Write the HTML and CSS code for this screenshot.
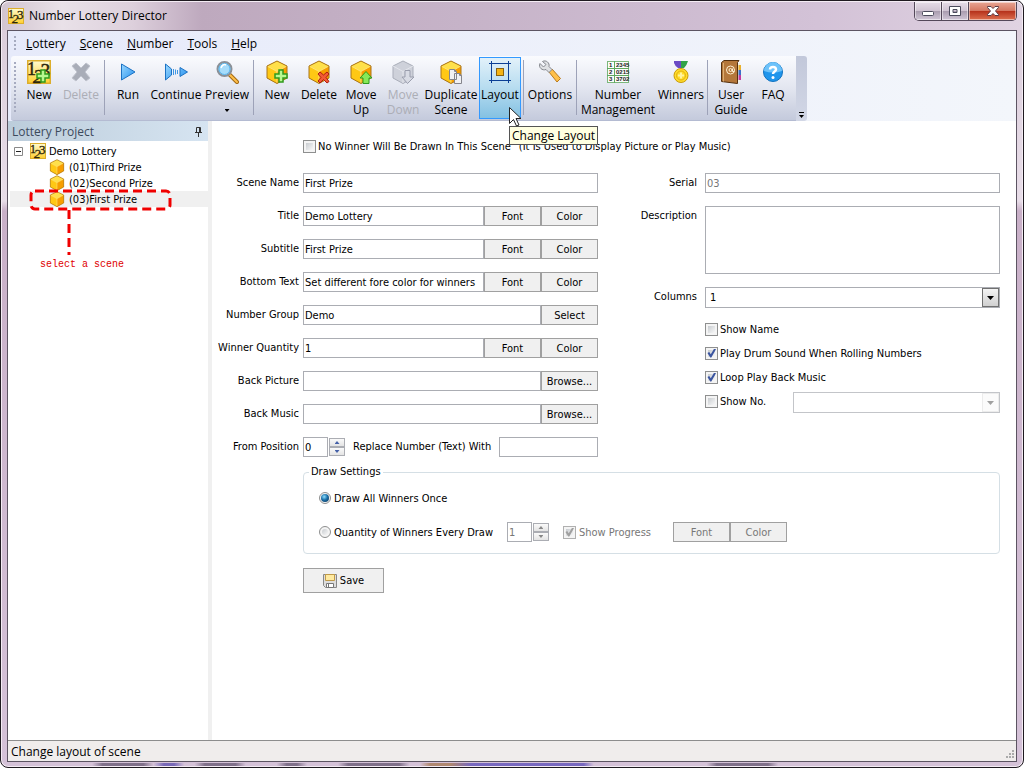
FILE: index.html
```html
<!DOCTYPE html>
<html lang="en">
<head>
    <meta charset="UTF-8">
    <meta name="viewport" content="width=device-width, initial-scale=1.0">
    <title>Number Lottery Director</title>
    <link rel="stylesheet" href="styles.css">
</head>
<body>
    <!-- shared icon parts -->
    <svg class="defs" width="0" height="0" aria-hidden="true">
        <defs>
            <linearGradient id="gold" x1="0" y1="0" x2="0" y2="1">
                <stop offset="0" stop-color="#fffbd0"/>
                <stop offset="1" stop-color="#ffcf2e"/>
            </linearGradient>
            <linearGradient id="blue" x1="0" y1="0" x2="1" y2="1">
                <stop offset="0" stop-color="#9ad8ff"/>
                <stop offset="1" stop-color="#2590ee"/>
            </linearGradient>
            <symbol id="cube" viewBox="0 0 24 24">
                <path d="M12 1 22 6 22 18 12 23.500 2 18 2 6Z" fill="#ffb400"/>
                <path d="M12 1 22 6 12 11.500 2 6Z" fill="#ffe04a"/>
                <path d="M2 6 12 11.500 12 23.500 2 18Z" fill="#ffc814"/>
                <path d="M22 6 12 11.500 12 23.500 22 18Z" fill="#f79e00"/>
                <path d="M2 6 12 11.500 22 6M12 11.500V23" fill="none" stroke="#ffe98a" stroke-width=".8"/>
                <path d="M12 1 22 6 22 18 12 23.500 2 18 2 6Z" fill="none" stroke="#a9741a"/>
            </symbol>
            <symbol id="logo" viewBox="0 0 16 16">
                <rect x=".5" y=".5" width="15" height="15" fill="url(#gold)" stroke="#dcae2c"/>
                <g font-family="Liberation Serif, serif" fill="#2c260c" stroke="#2c260c" stroke-width=".3">
                    <text x="0" y="10" font-size="12">1</text>
                    <text x="4" y="15" font-size="13" font-style="italic">2</text>
                    <text x="9" y="11" font-size="13">3</text>
                </g>
            </symbol>
            <symbol id="plus" viewBox="0 0 14 14">
                <path d="M5 1h4v4h4v4H9v4H5V9H1V5h4Z" fill="#b8f890" stroke="#2f9a1d" stroke-width="1.500"/>
            </symbol>
        </defs>
    </svg>

    <div class="window">
        <header class="titlebar">
            <svg class="icon-16"><use href="#logo"/></svg>
            <h1>Number Lottery Director</h1>
            <div class="caption">
                <button type="button" aria-label="Minimize"><svg width="14" height="14" viewBox="0 0 14 14"><rect x="1.500" y="7.500" width="11" height="4" rx="1" fill="#fff" stroke="#4b4b5c"/></svg></button>
                <button type="button" aria-label="Maximize"><svg width="14" height="14" viewBox="0 0 14 14"><path d="M1.500 2.500h11v9h-11Z M5 5.500h4v3H5Z" fill="#fff" fill-rule="evenodd" stroke="#4b4b5c"/></svg></button>
                <button type="button" class="close" aria-label="Close"><svg width="14" height="14" viewBox="0 0 14 14"><path d="M1.500 2.500h3.500l2 2 2-2h3.500v1L9.500 7l3 3.500v1H9l-2-2-2 2H1.500v-1l3-3.500-3-3.500Z" fill="#fff" stroke="#5a3a44"/></svg></button>
            </div>
        </header>

        <div class="client">
            <div class="bars">
                <nav class="menubar">
                    <a href="#"><u>L</u>ottery</a>
                    <a href="#"><u>S</u>cene</a>
                    <a href="#"><u>N</u>umber</a>
                    <a href="#"><u>T</u>ools</a>
                    <a href="#"><u>H</u>elp</a>
                </nav>

                <div class="toolbar">
                    <div class="tools">
                        <button type="button" class="tool">
                            <svg class="icon-24" viewBox="0 0 24 24"><use href="#logo" width="24" height="24"/><use href="#plus" x="9" y="9" width="14" height="14"/></svg>
                            <span>New</span>
                        </button>
                        <button type="button" class="tool" disabled>
                            <svg class="icon-24" viewBox="0 0 24 24"><path d="M3 6 7 3 12 8 17 3 21 6 16 12 21 18 17 21 12 16 7 21 3 18 8 12Z" fill="#a9adb8" stroke="#c0c3cd"/></svg>
                            <span>Delete</span>
                        </button>
                        <i class="sep"></i>
                        <button type="button" class="tool">
                            <svg class="icon-24" viewBox="0 0 24 24"><path d="M5.500 4v16L19 12Z" fill="url(#blue)" stroke="#1c72c4"/></svg>
                            <span>Run</span>
                        </button>
                        <button type="button" class="tool wide">
                            <svg class="icon-24" viewBox="0 0 24 24"><path d="M1.500 4v16l6-5V9Z M16 7.500v9l7.500-4.500Z" fill="url(#blue)" stroke="#1c72c4"/><path d="M9.500 9v6M11.500 9.500v5M13.500 10v4" stroke="#3c96e4"/></svg>
                            <span>Continue</span>
                        </button>
                        <button type="button" class="tool medium">
                            <svg class="icon-24" viewBox="0 0 24 24"><path d="M14 14 22 22" stroke="#a36a14" stroke-width="4" stroke-linecap="round"/><path d="M15 15 22 22" stroke="#ffc04a" stroke-width="2" stroke-linecap="round"/><circle cx="9.500" cy="9" r="7" fill="#a6dcfa" stroke="#8a9098" stroke-width="2"/><circle cx="9.500" cy="9" r="5.500" fill="none" stroke="#58b4ec"/><path d="M6 8c1-3 3-4 5-3" stroke="#fff" stroke-width="1.500" fill="none"/></svg>
                            <span>Preview</span>
                            <b class="drop"></b>
                        </button>
                        <i class="sep"></i>
                        <button type="button" class="tool">
                            <svg class="icon-24" viewBox="0 0 24 24"><use href="#cube" width="24" height="24"/><use href="#plus" x="9" y="9" width="14" height="14"/></svg>
                            <span>New</span>
                        </button>
                        <button type="button" class="tool">
                            <svg class="icon-24" viewBox="0 0 24 24"><use href="#cube" width="24" height="24"/><path d="M11 14l2-2 3.500 3L20 12l2 2-3 3.500 3 4-2 1.500-3.500-3.500L13 23l-2-2 3-3.500Z" fill="#f25a35" stroke="#b01c10"/></svg>
                            <span>Delete</span>
                        </button>
                        <button type="button" class="tool">
                            <svg class="icon-24" viewBox="0 0 24 24"><use href="#cube" width="24" height="24"/><path d="M17 11.500 23 18h-3v5.500h-6V18h-3Z" fill="#86e858" stroke="#2f9a1d"/></svg>
                            <span>Move Up</span>
                        </button>
                        <button type="button" class="tool" disabled>
                            <svg class="icon-24" viewBox="0 0 24 24"><path d="M12 1 22 6 22 18 12 23.500 2 18 2 6Z" fill="#ced1da" stroke="#a9adb9"/><path d="M2 6 12 11.500 22 6M12 11.500V23" fill="none" stroke="#e4e6ec"/><path d="M14 10.500h5V17h4l-6.500 6.500L11 17h3Z" fill="#d8dbe4" stroke="#9a9ead"/></svg>
                            <span>Move Down</span>
                        </button>
                        <button type="button" class="tool wide">
                            <svg class="icon-24" viewBox="0 0 24 24"><use href="#cube" width="24" height="24"/><path d="M10.500 9.500h5l2 2v8h-7Z M15.500 13.500h5l2 2v8h-7Z" fill="#f1f1f4" stroke="#85858c"/><path d="M15.500 9.500v2h2M20.500 13.500v2h2" fill="none" stroke="#85858c"/></svg>
                            <span>Duplicate Scene</span>
                        </button>
                        <div class="hot">
                            <button type="button" class="tool active">
                                <svg class="icon-24" viewBox="0 0 24 24"><path d="M1 3.500h22M1 20.500h22M3.500 1v22M20.500 1v22" stroke="#0b3f96"/><rect x="8.500" y="8.500" width="7" height="7" fill="#f5b415" stroke="#8a6310"/></svg>
                                <span>Layout</span>
                            </button>
                            <svg class="pointer" width="12" height="20" viewBox="0 0 12 20"><path d="M.5.5v16l4-4 3 6.500 2.500-1-3-6.500h5Z" fill="#fff" stroke="#222"/></svg>
                            <div class="tooltip" role="tooltip">Change Layout</div>
                        </div>
                        <i class="sep"></i>
                        <button type="button" class="tool medium">
                            <svg class="icon-24" viewBox="0 0 24 24"><path d="M11 12 14 9 22.500 18.500 19 22Z" fill="#ffc04a" stroke="#b97a1c"/><path d="M2 3.500 5.500 7 8 4.500 4.500 1.500C8-.5 12 3 11 6.500L14 9.500 11 12.500 8 9.500C4.500 11 0 7.500 2 3.500Z" fill="#dfe1e4" stroke="#85888e"/></svg>
                            <span>Options</span>
                        </button>
                        <i class="sep"></i>
                        <button type="button" class="tool extra">
                            <svg class="icon-24" viewBox="0 0 24 24">
                                <rect x="1.500" y="1.500" width="21" height="21" fill="#fafdfa" stroke="#7cb77c"/>
                                <path d="M8.500 1v22M1 8.500h22M1 15.500h22" stroke="#5fa85f"/>
                                <g font-family="Liberation Sans, sans-serif" font-size="6" font-weight="bold" fill="#222">
                                    <text x="3" y="7">1</text><text x="10" y="7">2345</text>
                                    <text x="3" y="14">2</text><text x="10" y="14">0215</text>
                                    <text x="3" y="21">3</text><text x="10" y="21">3702</text>
                                </g>
                            </svg>
                            <span>Number Management</span>
                        </button>
                        <button type="button" class="tool medium">
                            <svg class="icon-24" viewBox="0 0 24 24"><path d="M5 1h7v7H9Q6 6 5 3Z" fill="#6b4bc4"/><path d="M12 1h7Q18 5 15 8h-3Z" fill="#31a348"/><circle cx="12" cy="15.500" r="7" fill="#ffdc2b" stroke="#c99a08"/><circle cx="12" cy="15.500" r="4.500" fill="none" stroke="#e2b010"/><path d="M12 12.500v6M9 15.500h6" stroke="#fff3a0" stroke-width="2"/></svg>
                            <span>Winners</span>
                        </button>
                        <i class="sep"></i>
                        <button type="button" class="tool">
                            <svg class="icon-24" viewBox="0 0 24 24"><path d="M19 3h2v19h-2Z" fill="#f4f0e2"/><path d="M19.500 5h2.500v5h-2.500Z" fill="#e9b02e"/><path d="M19.500 10h2.500v5h-2.500Z" fill="#3c70c8"/><path d="M19.500 15h2.500v5h-2.500Z" fill="#c13aa0"/><path d="M2.500 2.500 5 .5H20L18.500 2.500V23.500L2.500 21.500Z" fill="#b4773a" stroke="#54300e"/><path d="M4.500 3v18.500" stroke="#dcae70"/><circle cx="11.500" cy="10" r="4" fill="none" stroke="#fff0d2"/><circle cx="11.500" cy="10" r="1.500" fill="none" stroke="#fff0d2"/><path d="M13.500 8.500v3h2" fill="none" stroke="#fff0d2"/></svg>
                            <span>User Guide</span>
                        </button>
                        <button type="button" class="tool">
                            <svg class="icon-24" viewBox="0 0 24 24"><circle cx="12" cy="12" r="9.500" fill="#1f95ec" stroke="#1272bf"/><path d="M3 11a9 9 0 0 1 18 0Q12 14 3 11Z" fill="#6cc2fa"/><path d="M9 9.500C9 6 15 6 15 9.500 15 11.500 12 11.500 12 14" fill="none" stroke="#fff" stroke-width="2.500"/><circle cx="12" cy="17.500" r="1.500" fill="#fff"/></svg>
                            <span>FAQ</span>
                        </button>
                    </div>
                    <button type="button" class="overflow" aria-label="More buttons"><b class="drop"></b></button>
                </div>
            </div>

            <div class="work">
                <aside class="project">
                    <h2>Lottery Project
                        <svg width="9" height="11" viewBox="0 0 9 11"><path d="M2.500 6V1.500h4V6M5.500 1v5M1 6.500h7M4.500 7v4" fill="none" stroke="#333"/></svg>
                    </h2>
                    <ul class="tree">
                        <li class="root"><svg class="expander" width="9" height="9" viewBox="0 0 9 9"><path d="M.5.5h8v8h-8Z" fill="#fff" stroke="#888"/><path d="M2 4.500h5" stroke="#222"/></svg><svg class="icon-16"><use href="#logo"/></svg>Demo Lottery</li>
                        <li><svg class="icon-16"><use href="#cube"/></svg>(01)Third Prize</li>
                        <li><svg class="icon-16"><use href="#cube"/></svg>(02)Second Prize</li>
                        <li class="selected"><svg class="icon-16"><use href="#cube"/></svg>(03)First Prize</li>
                    </ul>
                    <div class="callout">
                        <svg width="144" height="66" viewBox="0 0 144 66"><g fill="none" stroke="#f00000" stroke-width="3" stroke-dasharray="9 5"><rect x="2" y="2" width="139" height="18" rx="4"/><path d="M40 21V66"/></g></svg>
                        <p>select a scene</p>
                    </div>
                </aside>

                <main class="editor">
                    <div class="no-winner">
                        <label class="check"><input type="checkbox">No Winner Will Be Drawn In This Scene</label>
                        <span>(It Is Used to Display Picture or Play Music)</span>
                    </div>

                    <form class="form">
                        <div class="column">
                            <div class="row"><label for="sceneName">Scene Name</label><div class="field"><input type="text" id="sceneName" value="First Prize"></div></div>
                            <div class="row"><label for="title">Title</label><div class="field"><input type="text" id="title" value="Demo Lottery"><button type="button">Font</button><button type="button">Color</button></div></div>
                            <div class="row"><label for="subtitle">Subtitle</label><div class="field"><input type="text" id="subtitle" value="First Prize"><button type="button">Font</button><button type="button">Color</button></div></div>
                            <div class="row"><label for="bottomText">Bottom Text</label><div class="field"><input type="text" id="bottomText" value="Set different fore color for winners"><button type="button">Font</button><button type="button">Color</button></div></div>
                            <div class="row"><label for="numberGroup">Number Group</label><div class="field"><input type="text" id="numberGroup" value="Demo"><button type="button">Select</button></div></div>
                            <div class="row"><label for="quantity">Winner Quantity</label><div class="field"><input type="text" id="quantity" value="1"><button type="button">Font</button><button type="button">Color</button></div></div>
                            <div class="row"><label for="backPicture">Back Picture</label><div class="field"><input type="text" id="backPicture"><button type="button">Browse...</button></div></div>
                            <div class="row"><label for="backMusic">Back Music</label><div class="field"><input type="text" id="backMusic"><button type="button">Browse...</button></div></div>
                            <div class="row">
                                <label for="fromPosition">From Position</label>
                                <div class="field">
                                    <div class="spinner">
                                        <input type="text" id="fromPosition" value="0">
                                        <div class="spin"><button type="button" aria-label="Up"></button><button type="button" aria-label="Down"></button></div>
                                    </div>
                                    <label for="replaceWith" class="replace">Replace Number (Text) With</label>
                                    <input type="text" id="replaceWith">
                                </div>
                            </div>
                        </div>

                        <div class="column right">
                            <div class="row"><label for="serial">Serial</label><div class="field"><input type="text" id="serial" value="03" disabled></div></div>
                            <div class="row"><label for="description">Description</label><textarea id="description"></textarea></div>
                            <div class="row"><label for="columns">Columns</label><div class="combo"><select id="columns"><option>1</option></select></div></div>
                            <div class="checks">
                                <label class="check"><input type="checkbox">Show Name</label>
                                <label class="check"><input type="checkbox" checked>Play Drum Sound When Rolling Numbers</label>
                                <label class="check"><input type="checkbox" checked>Loop Play Back Music</label>
                                <div class="show-no">
                                    <label class="check"><input type="checkbox">Show No.</label>
                                    <div class="combo off"><select disabled aria-label="Number display"></select></div>
                                </div>
                            </div>
                        </div>

                        <fieldset class="draw">
                            <legend>Draw Settings</legend>
                            <label class="check"><input type="radio" name="draw" checked>Draw All Winners Once</label>
                            <div class="every">
                                <label class="check"><input type="radio" name="draw">Quantity of Winners Every Draw</label>
                                <div class="spinner">
                                    <input type="text" value="1" aria-label="Quantity per draw" disabled>
                                    <div class="spin"><button type="button" aria-label="Up" disabled></button><button type="button" aria-label="Down" disabled></button></div>
                                </div>
                                <label class="check off"><input type="checkbox" checked disabled>Show Progress</label>
                                <div class="field"><button type="button" disabled>Font</button><button type="button" disabled>Color</button></div>
                            </div>
                        </fieldset>

                        <button type="button" class="save">
                            <svg width="14" height="14" viewBox="0 0 14 14"><path d="M.5.5h13v13H2.500L.5 11.500Z" fill="#ddd" stroke="#888"/><path d="M2.500.5h9v6h-9Z" fill="#ffeaa0" stroke="#c09a48"/><path d="M3.500 9.500h7v4h-7Z" fill="#fff" stroke="#777"/><path d="M5.500 10v3" stroke="#777"/></svg>
                            Save
                        </button>
                    </form>
                </main>
            </div>

            <footer class="status">
                <span>Change layout of scene</span>
                <svg width="9" height="9" viewBox="0 0 9 9"><path d="M7 1h2M4 4h2M7 4h2M1 7h2M4 7h2M7 7h2" stroke="#aaa" stroke-width="2"/></svg>
            </footer>
        </div>
    </div>
</body>
</html>
```

FILE: styles.css
```css
*, *::before, *::after {
    box-sizing: border-box;
}
body {
    margin: 0;
    background: #fff;
    font-family: "DejaVu Sans Condensed", "Noto Sans", sans-serif;
    font-size: 11px;
    color: #000;
}
button, input, select, textarea {
    font: inherit;
    color: inherit;
    margin: 0;
}
.defs {
    position: absolute;
}
.icon-16 {
    width: 16px;
    height: 16px;
    flex: none;
}
.icon-24 {
    width: 24px;
    height: 24px;
    flex: none;
}

/* window frame */
.window {
    display: flex;
    flex-direction: column;
    height: 100vh;
    min-height: 640px;
    padding: 0 6px 5px;
    border: 1px solid #1f1a20;
    border-radius: 8px;
    box-shadow: inset 0 0 0 1px #f4ecf4;
    background:
        linear-gradient(90deg, transparent 9%, #80708a 10% 14%, transparent 15%, #7868b8 16% 17%, transparent 18% 19%, #80708a 20% 23%, transparent 24% 27%, #80708a 28% 29%, transparent 30% 33%, #80708a 34% 39%, transparent 40% 41%, #b08870 42% 44%, #7868c0 46% 57%, transparent 58% 69%, #80708a 70% 75%, transparent 76%) 0 100% / 100% 5px no-repeat border-box,
        linear-gradient(#d9cbd9, #e8dde8 200px, #c9b0c8 210px, #d5c2d8);
}
.titlebar {
    display: flex;
    align-items: center;
    height: 29px;
    margin: 0 -5px;
    padding-left: 6px;
    border-top: 1px solid #f4ecf4;
    border-radius: 7px 7px 0 0;
    background: linear-gradient(90deg, #d2c5d0, #e9e1e8 60px, #ddd0dc 130px, #bea9be 200px, #c6b3c8 45%, #d3c2d7 80%, #e0d3e2);
    flex: none;
}
.titlebar h1 {
    margin: 0 auto 0 5px;
    font: 12px "Open Sans", sans-serif;
    line-height: 16px;
}
.caption {
    display: flex;
    align-self: flex-start;
    margin-right: 5px;
    border: 1px solid #54485a;
    border-top: 0;
    border-radius: 0 0 5px 5px;
    overflow: hidden;
}
.caption button {
    display: flex;
    align-items: center;
    justify-content: center;
    width: 27px;
    height: 18px;
    padding: 0;
    border: 0;
    border-right: 1px solid #54485a;
    background: linear-gradient(#e6dce8, #cfc3d2 50%, #a89bae 50%, #d0c6d6);
    box-shadow: inset 0 0 0 1px rgba(255, 255, 255, .5);
}
.caption .close {
    width: 47px;
    border-right: 0;
    background: linear-gradient(#e8a594, #d4755f 50%, #b5301a 50%, #dd7050);
}
.client {
    display: flex;
    flex-direction: column;
    flex: 1;
    border: 1px solid #5c5462;
    background: #fff;
    min-height: 0;
}

/* menu and toolbar */
.bars {
    background: linear-gradient(90deg, #e6eafa, #f3f6fb);
    font-family: "Open Sans", sans-serif;
    font-size: 12px;
}
.menubar {
    display: flex;
    align-items: center;
    gap: 14px;
    height: 25px;
    margin-left: 6px;
    padding-left: 12px;
    background: repeating-linear-gradient(#a6abc0 0 2px, transparent 2px 4px) 0 5px / 2px 16px no-repeat;
}
.menubar a {
    color: #000;
    text-decoration: none;
}
.toolbar {
    display: flex;
    width: fit-content;
    margin-left: 3px;
}
.tools {
    display: flex;
    height: 65px;
    padding: 1px 2px 3px 7px;
    border-radius: 3px 0 0 3px;
    border-bottom: 1px solid #b4bbd2;
    background:
        repeating-linear-gradient(#a6abc0 0 2px, transparent 2px 4px) 3px 6px / 2px 52px no-repeat,
        linear-gradient(#fafbfe, #e3e6f0 50%, #c4cadc);
}
.tool {
    display: flex;
    flex-direction: column;
    align-items: center;
    width: 42px;
    padding: 3px 0 0;
    border: 0;
    background: none;
    line-height: 15px;
}
.tool span {
    margin-top: 3px;
}
.tool:disabled {
    color: #acaeb6;
}
.tool.medium {
    width: 48px;
}
.tool.wide {
    width: 54px;
}
.tool.extra {
    width: 78px;
}
.sep {
    width: 1px;
    margin: 3px 2px 2px;
    background: #9da2b8;
}
.drop {
    width: 5px;
    height: 3px;
    margin-top: 7px;
    background: #000;
    clip-path: polygon(0 0, 100% 0, 50% 100%);
}
.hot {
    display: flex;
    position: relative;
    margin-left: 1px;
}
.tool.active {
    height: 62px;
    padding-top: 2px;
    border: 1px solid #3399ff;
    background: linear-gradient(#e2f1fa, #b6dcf0 50%, #84c1e2);
}
.pointer {
    position: absolute;
    left: 30px;
    top: 50px;
    z-index: 2;
}
.tooltip {
    position: absolute;
    left: 30px;
    top: 69px;
    z-index: 1;
    padding: 0 2px;
    border: 1px solid #555;
    background: #ffffe1;
    line-height: 17px;
    white-space: nowrap;
}
.overflow {
    display: flex;
    flex-direction: column;
    align-items: center;
    justify-content: flex-end;
    width: 11px;
    padding: 0 0 3px;
    border: 0;
    border-radius: 0 3px 3px 0;
    background: linear-gradient(#c2c8da, #d2d7e6);
}
.overflow::before {
    content: "";
    width: 5px;
    height: 1px;
    background: #000;
}
.overflow .drop {
    margin-top: 2px;
}

/* project tree */
.work {
    display: flex;
    flex: 1;
    min-height: 0;
}
.project {
    position: relative;
    width: 204px;
    border-right: 4px solid #f0f0f0;
    flex: none;
}
.project h2 {
    display: flex;
    align-items: center;
    justify-content: space-between;
    height: 20px;
    margin: 0;
    padding: 0 5px 0 4px;
    background: linear-gradient(90deg, #bccddb, #d6e4f1);
    font: 12px "Open Sans", sans-serif;
    color: #3c4a5c;
}
.tree {
    margin: 0;
    padding: 2px 0 0 2px;
    list-style: none;
}
.tree li {
    display: flex;
    align-items: center;
    gap: 4px;
    height: 16px;
    padding-left: 39px;
}
.tree .root {
    gap: 3px;
    padding-left: 4px;
}
.expander {
    margin-right: 4px;
}
.tree .selected {
    background: #f0f0f0;
}
.callout {
    position: absolute;
    left: 21px;
    top: 68px;
    color: #e00000;
    font: 10px "Liberation Mono", monospace;
}
.callout svg {
    display: block;
}
.callout p {
    margin: 4px 0 0 11px;
    line-height: 12px;
}

/* scene editor */
.editor {
    flex: 1;
    padding: 17px 16px 0 0;
    min-width: 0;
}
.no-winner {
    display: flex;
    align-items: center;
    gap: 8px;
    height: 16px;
    margin: 0 0 19px 91px;
}
.form {
    display: grid;
    grid-template-columns: 386fr 402fr;
}
.column {
    display: flex;
    flex-direction: column;
    gap: 13px;
}
.row {
    display: grid;
    grid-template-columns: 91px 1fr;
}
.row > label {
    padding: 0 4px 0 0;
    line-height: 20px;
    text-align: right;
    white-space: nowrap;
}
.right .row {
    grid-template-columns: 107px 1fr;
}
.right .row > label {
    padding-right: 8px;
}
.field {
    display: flex;
    min-width: 0;
}
input[type="text"], textarea {
    flex: 1;
    min-width: 0;
    height: 20px;
    padding: 0 1px;
    border: 1px solid #abadb3;
    border-radius: 0;
    background: #fff;
}
input:disabled {
    color: #777;
}
textarea {
    height: 68px;
    resize: none;
}
.field > button {
    width: 57px;
    height: 20px;
    padding: 0;
    border: 1px solid #a0a0a0;
    background: #f0f0f0;
}
.field > button:disabled {
    color: #777;
}
.spinner {
    display: flex;
    gap: 1px;
    width: 42px;
    flex: none;
}
.spin {
    display: flex;
    flex-direction: column;
    width: 16px;
    padding: 1px 0;
}
.spin button {
    display: flex;
    align-items: center;
    justify-content: center;
    flex: 1;
    padding: 0;
    border: 1px solid #abadb3;
    background: linear-gradient(#fafafa, #e4e4e4);
    color: #4460a8;
}
.spin button::before {
    content: "";
    width: 5px;
    height: 3px;
    background: currentColor;
    clip-path: polygon(50% 0, 100% 100%, 0 100%);
}
.spin button + button::before {
    clip-path: polygon(0 0, 100% 0, 50% 100%);
}
.spin button:disabled {
    color: #888;
}
.replace {
    padding: 0 8px;
    line-height: 20px;
    white-space: nowrap;
}
.combo {
    position: relative;
    flex: 1;
}
.combo select {
    display: block;
    width: 100%;
    height: 21px;
    padding: 0 4px;
    border: 1px solid #abadb3;
    border-radius: 0;
    background: #fff;
    appearance: none;
}
.combo::before {
    content: "";
    position: absolute;
    top: 1px;
    right: 1px;
    width: 17px;
    height: 19px;
    border: 1px solid #707070;
    background: linear-gradient(#f4f4f4, #d0d0d0);
    pointer-events: none;
}
.combo::after {
    content: "";
    position: absolute;
    top: 9px;
    right: 6px;
    width: 7px;
    height: 4px;
    background: #000;
    clip-path: polygon(0 0, 100% 0, 50% 100%);
    pointer-events: none;
}
.combo.off::before {
    border-color: #c0c0c0;
    background: #f4f4f4;
}
.combo.off::after {
    background: #a0a0a0;
}
.checks {
    display: flex;
    flex-direction: column;
    gap: 8px;
    margin-left: 107px;
}
.check {
    display: flex;
    align-items: center;
    gap: 2px;
    height: 16px;
    white-space: nowrap;
}
.check.off {
    color: #777;
}
.check input {
    display: flex;
    align-items: center;
    justify-content: center;
    width: 13px;
    height: 13px;
    border: 1px solid #8e8f8f;
    background: linear-gradient(135deg, #c8ccd0, #f8f8f8) content-box, #f4f4f4;
    padding: 2px;
    appearance: none;
}
.check input[type="checkbox"]:checked::before {
    content: "";
    width: 9px;
    height: 9px;
    flex: none;
    background: #3b55a0;
    clip-path: polygon(5% 50%, 25% 40%, 42% 65%, 80% 0, 100% 8%, 48% 100%, 36% 100%);
}
.check input:disabled {
    border-color: #b0b0b0;
}
.check input[type="checkbox"]:disabled::before {
    background: #a0a0a0;
}
.check input[type="radio"] {
    width: 12px;
    height: 12px;
    border-radius: 50%;
}
.check input[type="radio"]:checked::before {
    content: "";
    width: 8px;
    height: 8px;
    flex: none;
    border-radius: 50%;
    background: radial-gradient(circle at 40% 35%, #8fe0ff, #1b6fa8 45%, #0c2c4c);
}
.show-no {
    display: flex;
    height: 16px;
    align-items: center;
}
.show-no .check {
    width: 88px;
}
.show-no .combo {
    margin-top: 3px;
}
.draw {
    grid-column: 1 / -1;
    min-width: 0;
    margin: 8px 0 0 91px;
    padding: 11px 15px 11px;
    border: 1px solid #d5dfe5;
    border-radius: 4px;
}
.draw legend {
    margin-left: -10px;
    padding: 0 2px;
    line-height: 14px;
}
.draw .check {
    gap: 3px;
}
.every {
    display: flex;
    align-items: center;
    gap: 14px;
    margin-top: 16px;
}
.every .field {
    margin-left: 8px;
}
.save {
    display: flex;
    align-items: center;
    justify-content: center;
    gap: 3px;
    width: 81px;
    height: 25px;
    margin: 14px 0 0 91px;
    border: 1px solid #a0a0a0;
    background: #f0f0f0;
}

.status {
    display: flex;
    align-items: center;
    justify-content: space-between;
    height: 21px;
    padding: 0 2px 0 3px;
    border-top: 1px solid #8d8d8d;
    background: #f0edec;
    font: 12px "Open Sans", sans-serif;
}
.status svg {
    align-self: flex-end;
    margin-bottom: 2px;
}
```
